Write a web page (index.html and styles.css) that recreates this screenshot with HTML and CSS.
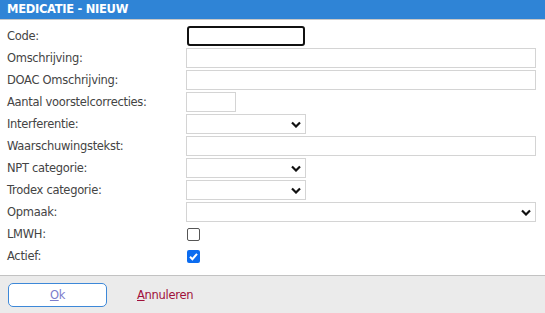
FILE: index.html
```html
<!DOCTYPE html>
<html>
<head>
<meta charset="utf-8">
<link rel="stylesheet" href="styles.css">
</head>
<body>
<div class="dialog">
  <div class="titlebar">MEDICATIE - NIEUW</div>
  <div class="form">
    <label class="lbl">Code:</label>
    <div class="field"><input class="inp code focus" type="text"></div>
    <label class="lbl">Omschrijving:</label>
    <div class="field"><input class="inp wide" type="text"></div>
    <label class="lbl">DOAC Omschrijving:</label>
    <div class="field"><input class="inp wide" type="text"></div>
    <label class="lbl">Aantal voorstelcorrecties:</label>
    <div class="field"><input class="inp small" type="text"></div>
    <label class="lbl">Interferentie:</label>
    <div class="field"><div class="sel mid"><span class="chev"><svg width="10" height="7" viewBox="0 0 10 7"><path d="M1 1.5 L5 5.5 L9 1.5" fill="none" stroke="#111" stroke-width="2.2"/></svg></span></div></div>
    <label class="lbl">Waarschuwingstekst:</label>
    <div class="field"><input class="inp wide" type="text"></div>
    <label class="lbl">NPT categorie:</label>
    <div class="field"><div class="sel mid"><span class="chev"><svg width="10" height="7" viewBox="0 0 10 7"><path d="M1 1.5 L5 5.5 L9 1.5" fill="none" stroke="#111" stroke-width="2.2"/></svg></span></div></div>
    <label class="lbl">Trodex categorie:</label>
    <div class="field"><div class="sel mid"><span class="chev"><svg width="10" height="7" viewBox="0 0 10 7"><path d="M1 1.5 L5 5.5 L9 1.5" fill="none" stroke="#111" stroke-width="2.2"/></svg></span></div></div>
    <label class="lbl">Opmaak:</label>
    <div class="field"><div class="sel widesel"><span class="chev"><svg width="10" height="7" viewBox="0 0 10 7"><path d="M1 1.5 L5 5.5 L9 1.5" fill="none" stroke="#111" stroke-width="2.2"/></svg></span></div></div>
    <label class="lbl">LMWH:</label>
    <div class="field"><span class="cb"></span></div>
    <label class="lbl">Actief:</label>
    <div class="field"><span class="cb checked"><svg width="13" height="13" viewBox="0 0 13 13"><path d="M3 6.8 L5.4 9.2 L10 3.8" fill="none" stroke="#fff" stroke-width="2"/></svg></span></div>
  </div>
  <div class="footer">
    <button class="ok"><u>O</u>k</button>
    <a class="cancel"><u>A</u>nnuleren</a>
  </div>
</div>
</body>
</html>
```
FILE: styles.css
```css
html, body {
  margin: 0;
  padding: 0;
  background: #fff;
}
.dialog {
  width: 545px;
  height: 313px;
  display: flex;
  flex-direction: column;
  font-family: "DejaVu Sans", Verdana, sans-serif;
}
.titlebar {
  height: 19px;
  background: #2f84d6;
  color: #fff;
  font-weight: bold;
  font-size: 11.5px;
  line-height: 19px;
  padding-left: 7px;
  border-bottom: 1px solid #c8c8c8;
  letter-spacing: -0.3px;
}
.form {
  flex: 1;
  display: grid;
  grid-template-columns: 186px 1fr;
  grid-auto-rows: 22px;
  padding-top: 5px;
  align-items: center;
}
.lbl {
  padding-left: 7px;
  font-size: 11.5px;
  color: #444;
  line-height: 22px;
  letter-spacing: -0.3px;
}
.field {
  display: flex;
  align-items: center;
  height: 22px;
}
.inp {
  box-sizing: border-box;
  height: 20px;
  border: 1px solid #d4d4d4;
  margin: 0;
  padding: 0;
  background: #fff;
  outline: none;
}
.code {
  width: 118px;
  margin-left: 1px;
  border: 2px solid #111;
  border-radius: 3px;
}
.wide {
  width: 350px;
}
.small {
  width: 50px;
}
.sel {
  box-sizing: border-box;
  height: 20px;
  border: 1px solid #d4d4d4;
  display: flex;
  align-items: center;
  justify-content: flex-end;
  background: #fff;
}
.mid {
  width: 120px;
}
.widesel {
  width: 350px;
}
.chev {
  display: flex;
  padding-right: 4px;
}
.cb {
  box-sizing: border-box;
  width: 13px;
  height: 13px;
  margin-left: 1px;
  border: 1px solid #555;
  border-radius: 2px;
  background: #fff;
  display: flex;
}
.cb.checked {
  border: none;
  background: #0b6cf0;
}
.footer {
  height: 38px;
  background: #ebebeb;
  border-top: 1px solid #c2c2c2;
  display: flex;
  align-items: center;
  padding-left: 8px;
  box-sizing: border-box;
  padding-top: 1px;
}
.ok {
  box-sizing: border-box;
  width: 99px;
  height: 24px;
  background: #fff;
  border: 1px solid #3d88d8;
  border-radius: 5px;
  font-family: "DejaVu Sans", Verdana, sans-serif;
  font-size: 11.5px;
  letter-spacing: -0.3px;
  color: #7c7ccc;
  padding: 0;
}
.ok u {
  text-decoration-color: #7c7ccc;
}
.cancel {
  margin-left: 30px;
  font-size: 11.5px;
  letter-spacing: -0.3px;
  color: #a0103a;
  cursor: pointer;
}
```
